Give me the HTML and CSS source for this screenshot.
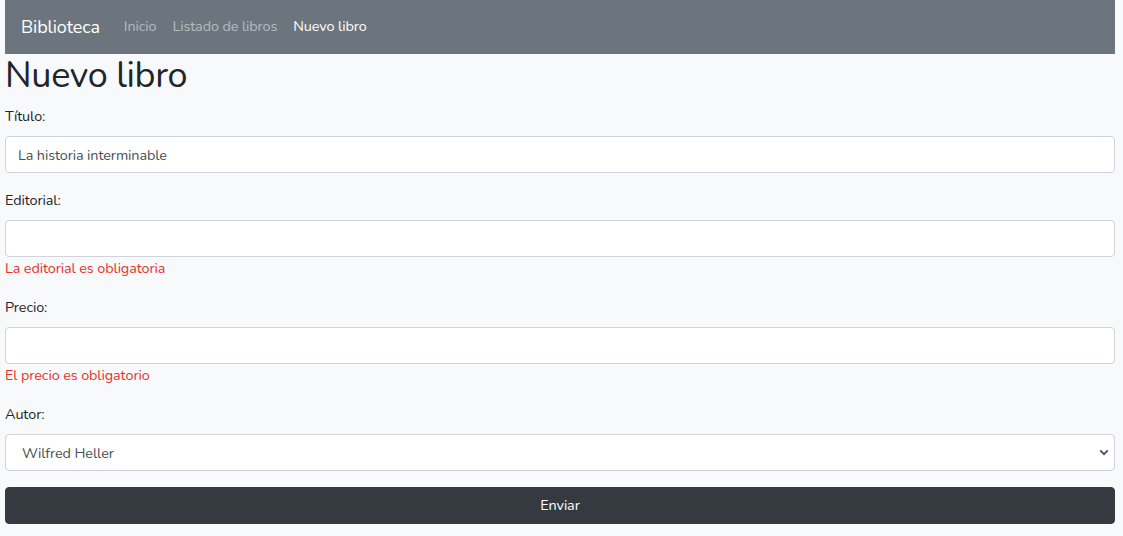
FILE: index.html
```html
<!DOCTYPE html>
<html lang="es">
<head>
<meta charset="utf-8">
<title>Biblioteca</title>
<link rel="stylesheet" href="styles.css">
</head>
<body>
<div class="page">
  <nav class="navbar">
    <span class="brand">Biblioteca</span>
    <ul class="nav">
      <li><a class="nav-link" href="#">Inicio</a></li>
      <li><a class="nav-link" href="#">Listado de libros</a></li>
      <li><a class="nav-link active" href="#">Nuevo libro</a></li>
    </ul>
  </nav>
  <h1 class="title">Nuevo libro</h1>
  <form class="form">
    <div class="group">
      <label class="label" for="titulo">Título:</label>
      <input class="control" id="titulo" type="text" value="La historia interminable">
    </div>
    <div class="group">
      <label class="label" for="editorial">Editorial:</label>
      <input class="control" id="editorial" type="text">
      <div class="error">La editorial es obligatoria</div>
    </div>
    <div class="group">
      <label class="label" for="precio">Precio:</label>
      <input class="control" id="precio" type="text">
      <div class="error">El precio es obligatorio</div>
    </div>
    <div class="group">
      <label class="label" for="autor">Autor:</label>
      <select class="control select" id="autor">
        <option>Wilfred Heller</option>
      </select>
    </div>
    <button class="btn" type="button">Enviar</button>
  </form>
</div>
</body>
</html>
```

FILE: styles.css
```css
* { box-sizing: border-box; }
html, body { margin: 0; padding: 0; }
body {
  background: #f8f9fa;
  color: #212529;
  font-family: "Nunito", Lato, "Noto Sans", sans-serif;
  font-size: 14.4px;
  line-height: 1.6;
  letter-spacing: -0.1px;
}
.page {
  padding: 0 8px 0 5px;
}
.navbar {
  display: flex;
  align-items: center;
  height: 54px;
  padding: 0 16px;
  background: #6c757d;
}
.brand {
  color: #fff;
  font-size: 18px;
  margin-right: 16px;
}
.nav {
  display: flex;
  list-style: none;
  margin: 0;
  padding: 0;
}
.nav-link {
  display: block;
  padding: 8px;
  color: rgba(255,255,255,.5);
  text-decoration: none;
}
.nav-link.active { color: #fff; }
.title {
  margin: 0 0 8px;
  font-size: 36px;
  font-weight: 400;
  line-height: 1.2;
  letter-spacing: -0.35px;
}
.group { margin-bottom: 16px; }
.label {
  display: block;
  margin-bottom: 8px;
}
.control {
  display: block;
  width: 100%;
  height: 37px;
  padding: 6px 12px;
  font: inherit;
  letter-spacing: inherit;
  color: #495057;
  background: #fff;
  border: 1px solid #ced4da;
  border-radius: 4px;
}
.select {
  -webkit-appearance: none;
  appearance: none;
  padding: 7px 12px 5px 16px;
  background: #fff url("data:image/svg+xml,%3Csvg xmlns='http://www.w3.org/2000/svg' width='12' height='8' viewBox='0 0 12 8'%3E%3Cpath d='M1.5 1.5 L6 6 L10.5 1.5' fill='none' stroke='%23495057' stroke-width='2.2'/%3E%3C/svg%3E") no-repeat right 5px center;
  background-size: 10px 7px;
}
.error {
  color: #e3342f;
}
.btn {
  display: block;
  width: 100%;
  height: 37px;
  font: inherit;
  letter-spacing: inherit;
  color: #fff;
  background: #343a40;
  border: 1px solid #343a40;
  border-radius: 4px;
}
```
